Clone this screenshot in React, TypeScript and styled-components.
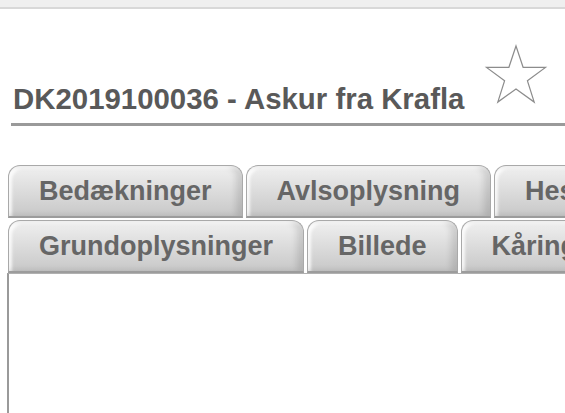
import { FC } from 'react';
import styled, { createGlobalStyle } from 'styled-components';

const GlobalStyle = createGlobalStyle`
  html, body {
    margin: 0;
    padding: 0;
    background: #fff;
    overflow: hidden;
  }
  body {
    font-family: 'Liberation Sans', Arial, sans-serif;
  }
`;

const Page = styled.div`
  width: 565px;
  height: 413px;
  display: flex;
  flex-direction: column;
  overflow: hidden;
`;

const TopBar = styled.div`
  height: 7px;
  flex-shrink: 0;
  background: #efefef;
  border-bottom: 2px solid #d8d8d8;
`;

const Header = styled.div`
  display: flex;
  align-items: flex-end;
  margin: 34px 0 0 11px;
  padding: 0 0 7px 2px;
  border-bottom: 3px solid #9a9a9a;
`;

const Title = styled.h1`
  margin: 0;
  font-size: 29.4px;
  font-weight: bold;
  color: #595959;
  white-space: nowrap;
`;

const StarIcon = styled.svg`
  width: 64px;
  height: 64px;
  margin: 0 0 9px 20px;
  flex-shrink: 0;
`;

const Tabs = styled.div`
  margin-top: 39px;
  display: flex;
  flex-direction: column;
  gap: 2px;
`;

const TabRow = styled.div`
  display: flex;
  gap: 3px;
  padding-left: 8px;
  overflow: hidden;
`;

const Tab = styled.div`
  flex-shrink: 0;
  height: 50px;
  line-height: 50px;
  padding: 0 30px;
  border: 1px solid #a9a9a9;
  border-bottom: 2px solid #9c9c9c;
  border-radius: 12px 12px 0 0;
  background: linear-gradient(to bottom, #f0f0f0 0%, #dedede 45%, #c8c8c8 100%);
  box-shadow: inset -6px 0 6px rgba(0, 0, 0, 0.12),
    inset 3px 3px 3px rgba(255, 255, 255, 0.8);
  color: #666;
  font-size: 27px;
  font-weight: bold;
  white-space: nowrap;
`;

const Panel = styled.div`
  flex: 1;
  margin-left: 7px;
  border-left: 2px solid #9a9a9a;
  border-top: 1px solid #b0b0b0;
`;

const Star: FC = () => (
  <StarIcon viewBox="0 0 64 64">
    <polygon
      points="32,3 39.1,24.3 61.5,24.4 43.4,37.7 50.2,59.1 32,46 13.8,59.1 20.6,37.7 2.5,24.4 24.9,24.3"
      fill="none"
      stroke="#8c8c8c"
      strokeWidth="1.2"
    />
  </StarIcon>
);

const rows = [
  ['Bedækninger', 'Avlsoplysning', 'Hestens data'],
  ['Grundoplysninger', 'Billede', 'Kåring'],
];

const App: FC = () => (
  <>
    <GlobalStyle />
    <Page>
      <TopBar />
      <Header>
        <Title>DK2019100036 - Askur fra Krafla</Title>
        <Star />
      </Header>
      <Tabs>
        {rows.map((row, i) => (
          <TabRow key={i}>
            {row.map((label) => (
              <Tab key={label}>{label}</Tab>
            ))}
          </TabRow>
        ))}
      </Tabs>
      <Panel />
    </Page>
  </>
);

export default App;
